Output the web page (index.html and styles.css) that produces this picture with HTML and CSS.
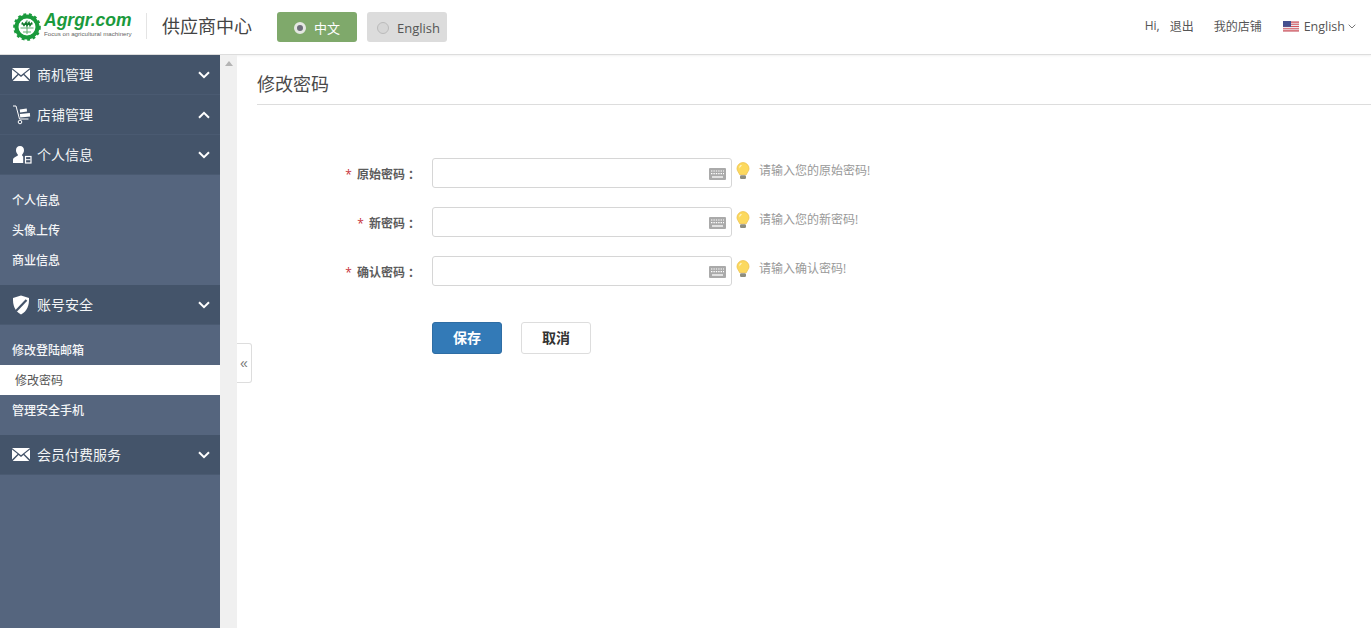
FILE: index.html
```html
<!DOCTYPE html>
<html lang="zh">
<head>
<meta charset="utf-8">
<title>修改密码</title>
<link rel="stylesheet" href="styles.css">
</head>
<body>
<svg class="defs" width="0" height="0" aria-hidden="true">
  <symbol id="mail" viewBox="0 0 18 13"><path fill="#fff" d="M0 0h18L9 7.2zM0 1.600v9.800l5.600-5.300zM18 1.600v9.800l-5.600-5.300zM6.500 7l2.500 2 2.500-2 5.800 6H.7z"/></symbol>
  <symbol id="chev" viewBox="0 0 12 8"><path fill="none" stroke="#fff" stroke-width="2" d="M1 1.200l5 5 5-5"/></symbol>
  <symbol id="kbd" viewBox="0 0 17 12"><rect width="17" height="12" rx="1" fill="#aaa"/><path stroke="#fff" stroke-width="1.200" stroke-dasharray="1.400 1" d="M2 3h13M2 5.600h13"/><path stroke="#fff" stroke-width="1.300" d="M3 9h11"/></symbol>
  <symbol id="bulb" viewBox="0 0 14 18"><path fill="#fcd95e" stroke="#eec04a" stroke-width=".8" d="M7 .6a6 6 0 0 0-6 6c0 2.500 2 3.700 2.600 6h6.800C11 10.300 13 9.100 13 6.600a6 6 0 0 0-6-6z"/><path fill="#fff6c8" d="M4.500 3a3 3 0 0 0-1 3.500c.8-1.600 1.500-2.300 2.700-3z"/><rect x="4" y="13.200" width="6" height="3.800" rx="1.200" fill="#8d8d80"/></symbol>
</svg>

<header class="topbar">
  <div class="brand">
    <svg class="gear" viewBox="0 0 28 28" width="28" height="28">
      <circle cx="14" cy="14" r="10.500" fill="none" stroke="#1a9a3c" stroke-width="4"/>
      <circle cx="14" cy="14" r="12.300" fill="none" stroke="#1a9a3c" stroke-width="3" stroke-dasharray="2.800 2.600"/>
      <circle cx="14" cy="14" r="8" fill="#fff"/>
      <path d="M8 11h12M7.500 15h13M10 19h8M14 7v14" stroke="#5fae6f" stroke-width="1"/>
      <path d="M9 9.500l2 3 2-3 1 3 2-3 1 3 2-3" fill="none" stroke="#137a2e" stroke-width="1.500"/>
    </svg>
    <div class="brand-text">
      <span class="brand-name">Agrgr.com</span>
      <span class="brand-tag">Focus on agricultural machinery</span>
    </div>
  </div>
  <span class="brand-title">供应商中心</span>
  <div class="lang-pill lang-on"><span class="radio radio-on"></span>中文</div>
  <div class="lang-pill lang-off"><span class="radio"></span>English</div>
  <nav class="top-links">
    <span class="hi">Hi,</span><span class="link-exit">退出</span>
    <span class="link-shop">我的店铺</span>
    <svg class="flag" viewBox="0 0 16 11" width="16" height="11">
      <rect width="16" height="11" fill="#e9e9ee"/>
      <path d="M0 1.100h16M0 3.300h16M0 5.500h16M0 7.700h16M0 9.900h16" stroke="#d4545c" stroke-width="1.100"/>
      <rect width="8" height="5.800" fill="#44508f"/>
    </svg>
    <span class="cur-lang">English</span>
    <svg class="tiny-chev" viewBox="0 0 8 5" width="8" height="5"><path d="M.7.700L4 4l3.300-3.300" fill="none" stroke="#777" stroke-width="1"/></svg>
  </nav>
</header>

<div class="shell">
  <aside class="sidebar">
    <div class="menu-head">
      <svg class="mi mi-mail"><use href="#mail"/></svg><span class="menu-label">商机管理</span><svg class="chev"><use href="#chev"/></svg>
    </div>
    <div class="menu-head">
      <svg class="mi mi-cart" viewBox="0 0 20 20"><path d="M1 1h3l3.500 13h9" fill="none" stroke="#fff" stroke-width="1"/><rect x="8" y="4" width="7" height="3" fill="#fff" transform="rotate(-8 11 6)"/><rect x="8" y="8.500" width="10" height="3.500" fill="#fff" transform="rotate(-5 13 10)"/><circle cx="8" cy="17" r="1.800" fill="none" stroke="#fff"/></svg><span class="menu-label">店铺管理</span><svg class="chev chev-up"><use href="#chev"/></svg>
    </div>
    <div class="menu-head">
      <svg class="mi mi-user" viewBox="0 0 20 20"><path fill="#fff" d="M8 1c2.600 0 4 1.800 4 4.300 0 2-1 3.500-1.800 4.300v1.200l1 .7v6.500H1v-3c0-2.400 3.400-3.200 4.800-4.400V9.600C5 8.800 4 7.300 4 5.300 4 2.800 5.400 1 8 1z"/><rect x="13.500" y="11.500" width="5.500" height="6.500" fill="none" stroke="#fff" stroke-width="1.200"/><path d="M14 14.700h4.500" stroke="#fff"/></svg><span class="menu-label">个人信息</span><svg class="chev"><use href="#chev"/></svg>
    </div>
    <ul class="submenu">
      <li>个人信息</li>
      <li>头像上传</li>
      <li>商业信息</li>
    </ul>
    <div class="menu-head">
      <svg class="mi mi-shield" viewBox="0 0 18 20"><path fill="#fff" d="M9 .5l8 2.500c.3 7-1.500 13-8 16.500C2.500 16 .7 10 1 3z"/><path d="M14.500 5L4 16" stroke="#44546a" stroke-width="2.200"/></svg><span class="menu-label">账号安全</span><svg class="chev"><use href="#chev"/></svg>
    </div>
    <ul class="submenu">
      <li>修改登陆邮箱</li>
      <li class="active">修改密码</li>
      <li>管理安全手机</li>
    </ul>
    <div class="menu-head">
      <svg class="mi mi-mail"><use href="#mail"/></svg><span class="menu-label">会员付费服务</span><svg class="chev"><use href="#chev"/></svg>
    </div>
  </aside>

  <div class="rail">
    <span class="rail-arrow"></span>
    <button class="collapse" type="button">«</button>
  </div>

  <main class="content">
    <h1 class="page-title">修改密码</h1>
    <form class="pw-form">
      <div class="row">
        <label class="field-label"><span class="req">*</span>原始密码<span class="colon">：</span></label>
        <div class="input-box"><svg class="kbd"><use href="#kbd"/></svg></div>
        <svg class="bulb"><use href="#bulb"/></svg>
        <span class="hint">请输入您的原始密码!</span>
      </div>
      <div class="row">
        <label class="field-label"><span class="req">*</span>新密码<span class="colon">：</span></label>
        <div class="input-box"><svg class="kbd"><use href="#kbd"/></svg></div>
        <svg class="bulb"><use href="#bulb"/></svg>
        <span class="hint">请输入您的新密码!</span>
      </div>
      <div class="row">
        <label class="field-label"><span class="req">*</span>确认密码<span class="colon">：</span></label>
        <div class="input-box"><svg class="kbd"><use href="#kbd"/></svg></div>
        <svg class="bulb"><use href="#bulb"/></svg>
        <span class="hint">请输入确认密码!</span>
      </div>
      <div class="actions">
        <button class="btn btn-save" type="button">保存</button>
        <button class="btn btn-cancel" type="button">取消</button>
      </div>
    </form>
  </main>
</div>
</body>
</html>
```
FILE: styles.css
```css
* { box-sizing: border-box; }
html, body { margin: 0; height: 100%; overflow: hidden; }
body {
  font-family: "Open Sans", "Noto Sans CJK SC", "Liberation Sans", sans-serif;
  font-size: 12px;
  color: #333;
  background: #fff;
  display: flex;
  flex-direction: column;
}
.defs { position: absolute; }

/* top bar */
.topbar {
  height: 55px;
  flex: none;
  display: flex;
  align-items: center;
  padding: 0 15px 2px 13px;
  border-bottom: 1px solid #ddd;
  box-shadow: 0 1px 2px rgba(0,0,0,.06);
}
.brand {
  display: flex;
  align-items: center;
  gap: 3px;
  width: 133px;
  height: 26px;
  border-right: 1px solid #e4e4e4;
  box-sizing: content-box;
}
.gear { flex: none; margin-top: 1px; }
.brand-text { display: flex; flex-direction: column; width: 90px; }
.brand-name {
  font-family: "Liberation Sans", sans-serif;
  font-size: 17.500px;
  font-weight: 700;
  font-style: italic;
  color: #1a9a3c;
  line-height: 20px;
  margin-top: -4px;
}
.brand-tag {
  font-family: "Liberation Sans", sans-serif;
  font-size: 6.200px;
  color: #666;
  line-height: 8px;
  white-space: nowrap;
}
.brand-title {
  font-size: 18px;
  color: #444;
  margin-left: 15px;
  margin-bottom: 2px;
  width: 115px;
  flex: none;
}
.lang-pill {
  height: 30px;
  width: 80px;
  border-radius: 3px;
  display: flex;
  align-items: center;
  font-size: 13px;
  margin-top: 1px;
  padding-top: 2px;
}
.lang-on { background: #7fa96b; color: #fff; padding-left: 17px; }
.lang-off { background: #dcdcdc; color: #555; margin-left: 10px; padding-left: 10px; }
.radio {
  width: 12px;
  height: 12px;
  border-radius: 50%;
  background: #d6d6d6;
  border: 1px solid #bbb;
  margin-right: 8px;
  flex: none;
}
.radio-on {
  background: #6d6d7a;
  border: 3px solid #e4e7e2;
}
.top-links {
  margin-left: auto;
  display: flex;
  align-items: center;
  color: #555;
  font-size: 12px;
}
.hi, .link-exit, .link-shop { margin-bottom: 1px; }
.link-exit { margin-left: 10px; }
.link-shop { margin-left: 20px; }
.flag { margin-left: 21px; }
.cur-lang { margin-left: 5px; font-size: 12.500px; }
.tiny-chev { margin-left: 3px; margin-top: 1px; }

/* layout */
.shell { flex: 1; display: flex; min-height: 0; }
.sidebar { width: 220px; flex: none; background: #55657e; }
.menu-head {
  height: 40px;
  background: #44546a;
  border-bottom: 1px solid #4a5a71;
  display: flex;
  align-items: center;
  padding: 0 10px 0 12px;
  color: #fff;
  font-size: 14px;
}
.mi { flex: none; }
.mi-mail { width: 18px; height: 13px; }
.mi-cart { width: 20px; height: 20px; }
.mi-user { width: 20px; height: 20px; }
.mi-shield { width: 18px; height: 20px; }
.menu-label { margin-left: 7px; margin-top: -2px; color: #f2f4f6; }
.mi-cart + .menu-label { margin-left: 5px; }
.mi-user + .menu-label { margin-left: 5px; }
.chev { width: 12px; height: 8px; margin-left: auto; flex: none; }
.chev-up { transform: rotate(180deg); }
.submenu {
  list-style: none;
  margin: 0;
  padding: 10px 0;
  color: #f4f5f7;
  font-size: 12px;
  font-weight: 500;
}
.submenu li { height: 30px; line-height: 32px; padding-left: 12px; }
.submenu .active { background: #fff; color: #555; padding-left: 15px; font-weight: 400; }

.rail {
  width: 17px;
  flex: none;
  background: #f0f0f0;
  position: relative;
}
.rail-arrow {
  position: absolute;
  left: 5px;
  top: 6px;
  border-left: 4px solid transparent;
  border-right: 4px solid transparent;
  border-bottom: 5px solid #b4b4b4;
}
.collapse {
  position: absolute;
  left: 17px;
  top: 288px;
  width: 15px;
  height: 40px;
  padding: 0;
  background: #fff;
  border: 1px solid #ddd;
  border-left: 0;
  border-radius: 0 3px 3px 0;
  color: #777;
  font: 14px/1 "Liberation Sans", sans-serif;
}

/* content */
.content { flex: 1; min-width: 0; padding-left: 20px; }
.page-title {
  margin: 0;
  height: 50px;
  line-height: 59px;
  border-bottom: 1px solid #ddd;
  font-size: 18px;
  font-weight: 400;
  color: #4a4a4a;
}
.pw-form { padding-top: 53px; }
.row {
  display: flex;
  align-items: center;
  height: 30px;
  margin-bottom: 19px;
}
.field-label {
  width: 160px;
  flex: none;
  text-align: right;
  font-size: 12px;
  font-weight: 700;
  color: #5c5c5c;
  padding-top: 2px;
}
.colon {
  display: inline-block;
  margin-left: 3px;
  margin-right: -3px;
}
.req { color: #c8323c; font-weight: 400; margin-right: 5px; }
.input-box {
  margin-left: 15px;
  width: 300px;
  height: 30px;
  border: 1px solid #d6d6d6;
  border-radius: 3px;
  display: flex;
  align-items: center;
  justify-content: flex-end;
  padding-right: 5px;
  background: #fff;
}
.kbd { width: 17px; height: 12px; margin-top: 1px; }
.bulb { width: 14px; height: 18px; margin-left: 4px; margin-top: -5px; flex: none; }
.hint { margin-left: 9px; color: #999; font-size: 12px; margin-top: -6px; }
.actions { display: flex; gap: 19px; margin-left: 175px; margin-top: 36px; }
.btn {
  width: 70px;
  height: 32px;
  border-radius: 3px;
  font-family: inherit;
  font-size: 14px;
  font-weight: 700;
  padding: 0 0 2px;
}
.btn-save { background: #337ab7; border: 1px solid #2e6da4; color: #fff; }
.btn-cancel { background: #fff; border: 1px solid #ddd; color: #333; }
```
